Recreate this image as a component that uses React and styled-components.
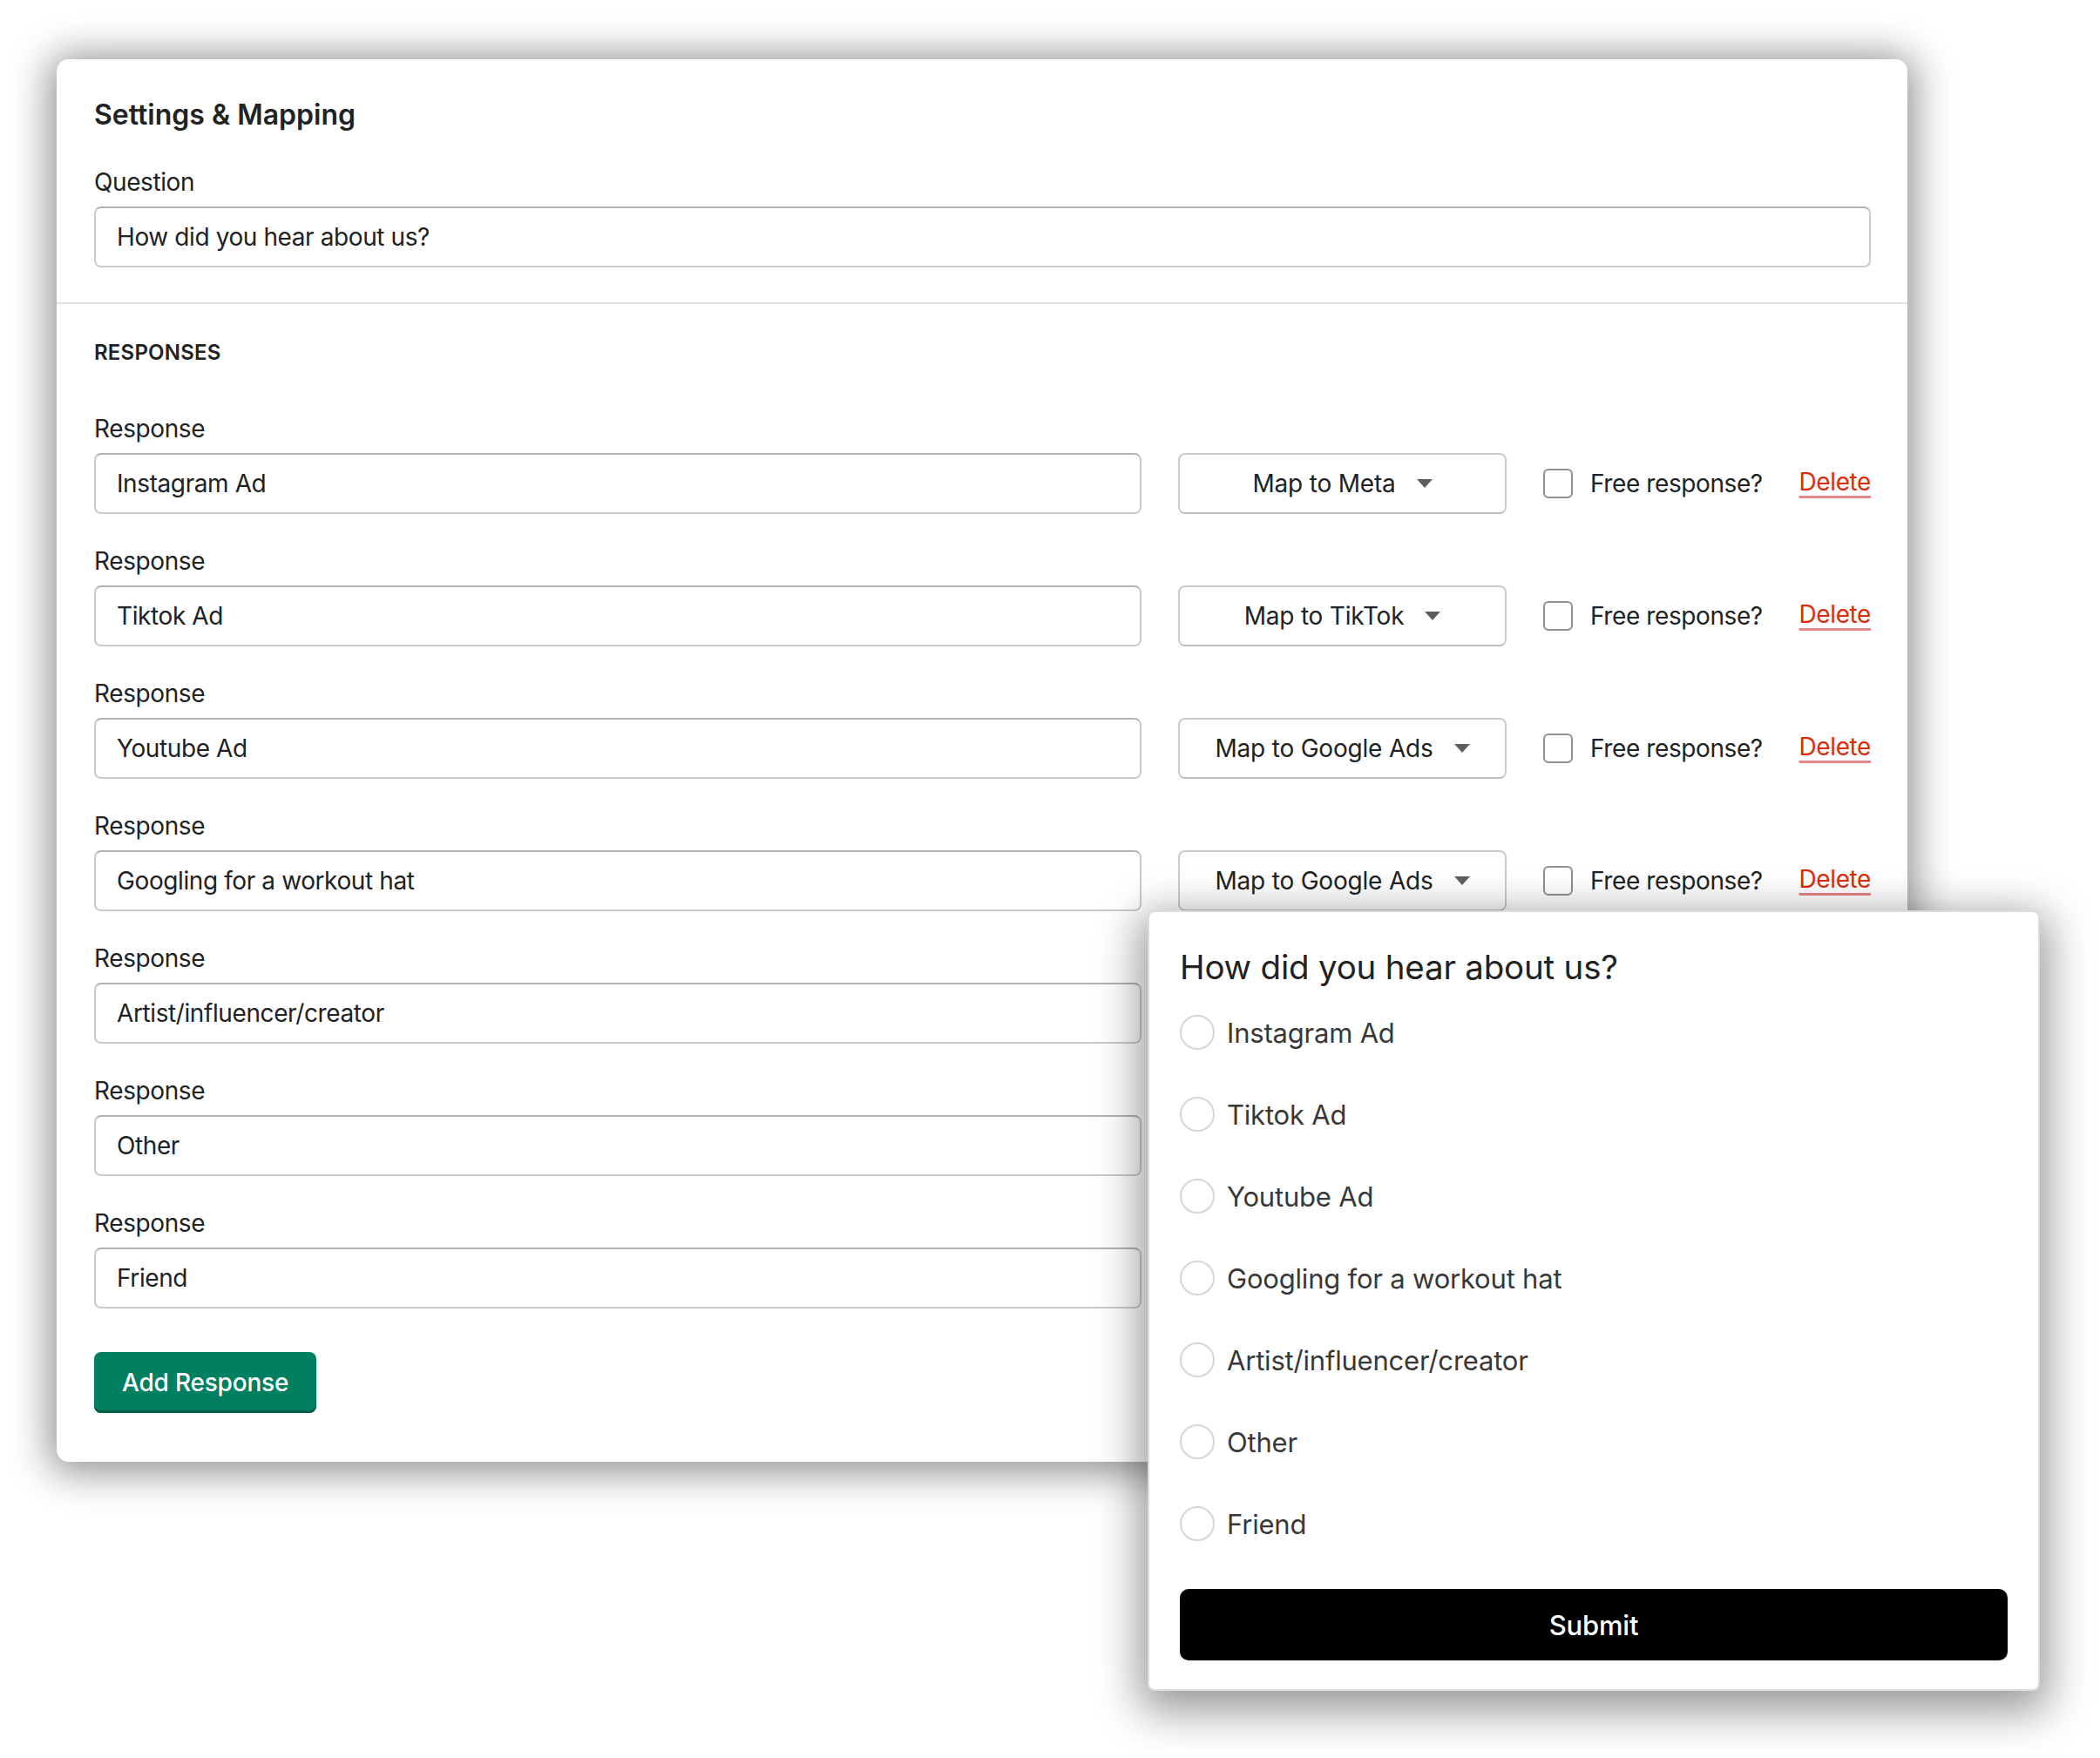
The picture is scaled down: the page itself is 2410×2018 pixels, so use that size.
import React from "react";
import styled, { createGlobalStyle } from "styled-components";

const GlobalStyle = createGlobalStyle`
  html, body { margin: 0; padding: 0; background: #ffffff; }
  body { font-family: Inter, "Noto Sans", sans-serif; color: #202223; }
  * { box-sizing: border-box; }
`;

const Stage = styled.div`
  position: relative;
  width: 2410px;
  height: 2018px;
  overflow: hidden;
  padding: 68px 0 0 65px;
`;

const Card = styled.section`
  width: 2124px;
  background: #ffffff;
  border-radius: 14px;
  box-shadow: 0 4px 46px 8px rgba(0, 0, 0, 0.44);
`;

const CardSection = styled.div`
  padding: ${(p) => p.$pad};
  border-top: ${(p) => (p.$divider ? "2px solid #e1e3e5" : "none")};
`;

const Title = styled.h2`
  margin: 0;
  font-size: 32px;
  line-height: 48px;
  font-weight: 600;
  letter-spacing: 0;
  color: #202223;
`;

const Field = styled.div`
  display: flex;
  flex-direction: column;
  gap: 8px;
  margin-top: ${(p) => p.$top || 0}px;
`;

const Label = styled.label`
  font-size: 28px;
  line-height: 40px;
  letter-spacing: -0.4px;
  color: #202223;
`;

const TextInput = styled.input`
  width: 100%;
  height: 70px;
  padding: 0 24px;
  border: 2px solid #c9cccf;
  border-top-color: #aeb4b9;
  border-radius: 8px;
  background: #ffffff;
  font-family: Inter, "Noto Sans", sans-serif;
  font-size: 28px;
  letter-spacing: -0.4px;
  color: #202223;
  outline: none;
`;

const SubHeading = styled.h3`
  margin: 0;
  font-size: 24px;
  line-height: 32px;
  font-weight: 600;
  letter-spacing: 0.2px;
  text-transform: uppercase;
  color: #202223;
`;

const ResponseList = styled.div`
  display: flex;
  flex-direction: column;
  gap: 34px;
  margin-top: 51px;
`;

const ResponseLine = styled.div`
  display: grid;
  grid-template-columns: 1fr 377px 251px 83px;
  column-gap: 42px;
  align-items: center;
  min-height: 70px;
`;

const SelectBox = styled.div`
  height: 70px;
  display: flex;
  align-items: center;
  justify-content: center;
  gap: 24px;
  border: 2px solid #c9cccf;
  border-bottom-color: #babfc3;
  border-radius: 8px;
  background: #ffffff;
  font-size: 28px;
  letter-spacing: -0.2px;
  color: #202223;
`;

const CheckGroup = styled.label`
  display: flex;
  align-items: center;
  gap: 20px;
  font-size: 28px;
  letter-spacing: -0.4px;
  color: #202223;
  white-space: nowrap;
`;

const CheckBox = styled.span`
  width: 34px;
  height: 34px;
  flex: 0 0 34px;
  border: 2px solid #8c9196;
  border-radius: 6px;
  background: #ffffff;
`;

const DeleteLink = styled.a`
  justify-self: end;
  font-size: 28px;
  letter-spacing: -0.4px;
  color: #d72c0d;
  text-decoration: underline;
  text-decoration-color: #e3858a;
  text-decoration-thickness: 3px;
  text-underline-offset: 6px;
  white-space: nowrap;
  margin-top: -4px;
`;

const PrimaryButton = styled.button`
  margin-top: 50px;
  height: 70px;
  padding: 0 32px;
  border: none;
  border-radius: 8px;
  background: #008060;
  box-shadow: inset 0 -3px 0 #005e46;
  color: #ffffff;
  font-family: Inter, "Noto Sans", sans-serif;
  font-size: 28px;
  font-weight: 500;
  letter-spacing: -0.2px;
`;

const Popup = styled.div`
  position: absolute;
  left: 1317px;
  top: 1045px;
  width: 1024px;
  height: 896px;
  background: #ffffff;
  border: 2px solid #dcdcdc;
  border-radius: 8px;
  padding: 39px 35px 33px;
  box-shadow: 0 14px 50px 10px rgba(0, 0, 0, 0.4);
  display: flex;
  flex-direction: column;
`;

const PopupTitle = styled.h2`
  margin: 0 0 4px;
  font-size: 38.5px;
  line-height: 48px;
  font-weight: 400;
  letter-spacing: -0.2px;
  color: #222222;
`;

const Option = styled.label`
  height: 94px;
  display: flex;
  align-items: center;
  gap: 14px;
  font-size: 31px;
  letter-spacing: -0.2px;
  color: #383838;
`;

const Radio = styled.span`
  width: 40px;
  height: 40px;
  flex: 0 0 40px;
  border-radius: 50%;
  border: 2px solid #d6d6d6;
  background: #ffffff;
`;

const SubmitButton = styled.button`
  margin-top: 28px;
  height: 82px;
  width: 100%;
  border: none;
  border-radius: 10px;
  background: #000000;
  color: #ffffff;
  font-family: Inter, "Noto Sans", sans-serif;
  font-size: 31px;
  font-weight: 500;
  letter-spacing: -0.2px;
`;

const Caret = () => (
  <svg width="18" height="10" viewBox="0 0 18 10" aria-hidden="true">
    <polygon points="0,0 18,0 9,10" fill="#5c5f62" />
  </svg>
);

const responses = [
  { value: "Instagram Ad", map: "Map to Meta" },
  { value: "Tiktok Ad", map: "Map to TikTok" },
  { value: "Youtube Ad", map: "Map to Google Ads" },
  { value: "Googling for a workout hat", map: "Map to Google Ads" },
  { value: "Artist/influencer/creator", map: null },
  { value: "Other", map: null },
  { value: "Friend", map: null },
];

export default function App() {
  return (
    <>
      <GlobalStyle />
      <Stage>
        <Card>
          <CardSection $pad="40px 42px 40px 43px">
            <Title>Settings &amp; Mapping</Title>
            <Field $top={33}>
              <Label>Question</Label>
              <TextInput readOnly defaultValue="How did you hear about us?" />
            </Field>
          </CardSection>
          <CardSection $divider $pad="40px 42px 56px 43px">
            <SubHeading>Responses</SubHeading>
            <ResponseList>
              {responses.map((r, i) => (
                <Field key={i}>
                  <Label>Response</Label>
                  <ResponseLine>
                    <TextInput readOnly defaultValue={r.value} />
                    {r.map && (
                      <>
                        <SelectBox>
                          <span>{r.map}</span>
                          <Caret />
                        </SelectBox>
                        <CheckGroup>
                          <CheckBox />
                          Free response?
                        </CheckGroup>
                        <DeleteLink href="#">Delete</DeleteLink>
                      </>
                    )}
                  </ResponseLine>
                </Field>
              ))}
            </ResponseList>
            <PrimaryButton>Add Response</PrimaryButton>
          </CardSection>
        </Card>
        <Popup>
          <PopupTitle>How did you hear about us?</PopupTitle>
          {responses.map((r, i) => (
            <Option key={i}>
              <Radio />
              {r.value}
            </Option>
          ))}
          <SubmitButton>Submit</SubmitButton>
        </Popup>
      </Stage>
    </>
  );
}
